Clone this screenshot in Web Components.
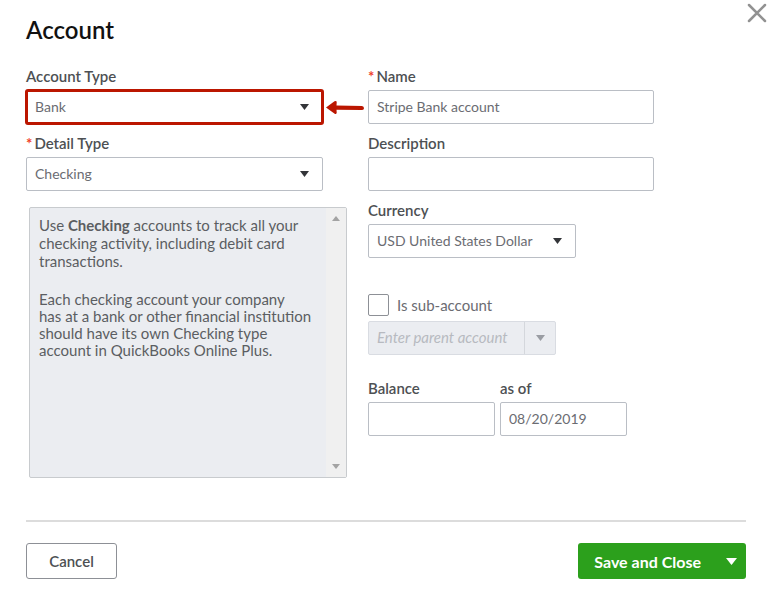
<!DOCTYPE html>
<html lang="en">
<head>
<meta charset="utf-8">
<title>Account</title>
<style>
  body {
    margin: 0;
    background: #fff;
    color: #4d5053;
    font-family: Lato, "Open Sans", sans-serif;
    font-size: 15px;
  }
</style>
</head>
<body>
<account-dialog heading="Account">
  <select-field slot="type" value="Bank" highlight>Account Type</select-field>
  <select-field slot="type" value="Checking" required>Detail Type</select-field>
  <help-box slot="help">
    <p>Use <b>Checking</b> accounts to track all your<br>checking activity, including debit card<br>transactions.</p>
    <p>Each checking account your company<br>has at a bank or other financial institution<br>should have its own Checking type<br>account in QuickBooks Online Plus.</p>
  </help-box>
  <text-field slot="details" value="Stripe Bank account" required>Name</text-field>
  <text-field slot="details">Description</text-field>
  <select-field slot="details" value="USD United States Dollar" compact>Currency</select-field>
  <sub-account slot="parent" placeholder="Enter parent account">Is sub-account</sub-account>
  <text-field slot="balance">Balance</text-field>
  <text-field slot="balance" value="08/20/2019">as of</text-field>
  <plain-button slot="footer">Cancel</plain-button>
  <split-button slot="footer">Save and Close</split-button>
</account-dialog>

<script>
const fieldStyles = `
  :host {
    display: block;
  }
  label {
    display: block;
    margin-bottom: 4px;
    line-height: 19px;
    font-weight: 600;
    white-space: nowrap;
  }
  .star {
    color: #f0402a;
    font-weight: 700;
    margin-right: 2px;
  }
  input, select {
    box-sizing: border-box;
    width: 100%;
    height: 34px;
    margin: 0;
    padding: 0 8px 2px;
    border: 1px solid #babec5;
    border-radius: 2px;
    background: #fff;
    color: #6b6c72;
    font: inherit;
    font-size: 14px;
    appearance: none;
  }
`;

// Small triangle shared by the drop-downs
const caret = (color, width = 9, height = 6) => `
  <svg class="caret" width="${width}" height="${height}" viewBox="0 0 9 6" preserveAspectRatio="none" aria-hidden="true">
    <path d="M0 0h9L4.5 6z" fill="${color}"/>
  </svg>
`;

class TextFieldElement extends HTMLElement {
  constructor() {
    super();
    const star = this.hasAttribute("required") ? `<span class="star">*</span>` : "";
    this.attachShadow({ mode: "open" }).innerHTML = `
      <style>${fieldStyles}</style>
      <label for="control">${star}<slot></slot></label>
      <input id="control" type="text" value="${this.getAttribute("value") || ""}">
    `;
  }
}

class SelectFieldElement extends HTMLElement {
  constructor() {
    super();
    const star = this.hasAttribute("required") ? `<span class="star">*</span>` : "";
    this.attachShadow({ mode: "open" }).innerHTML = `
      <style>
        ${fieldStyles}
        .box {
          display: grid;
          position: relative;
          align-items: center;
        }
        :host([compact]) .box {
          width: 208px;
        }
        select, .caret {
          grid-area: 1 / 1;
        }
        .caret {
          justify-self: end;
          margin-right: 14px;
          pointer-events: none;
        }
        .pointer {
          display: none;
        }
        :host([highlight]) select {
          outline: 3px solid #bb1600;
          outline-offset: -2px;
        }
        /* Callout arrow, lies over the gap beside the field */
        :host([highlight]) .pointer {
          display: block;
          position: absolute;
          left: 100%;
          margin-left: 3px;
        }
      </style>
      <label for="control">${star}<slot></slot></label>
      <div class="box">
        <select id="control"><option>${this.getAttribute("value")}</option></select>
        ${caret("#333539")}
        <svg class="pointer" width="39" height="14" viewBox="0 0 39 14" aria-hidden="true">
          <path d="M0 7.500L8.500 1.200Q10.800 .2 10.700 2.500L10.500 5.500L36 6q2 .3 2 2.200t-2 1.800L10.500 9.800l.2 2.700q.2 2-2 1.200z" fill="#bb1600"/>
        </svg>
      </div>
    `;
  }
}

class HelpBoxElement extends HTMLElement {
  constructor() {
    super();
    this.attachShadow({ mode: "open" }).innerHTML = `
      <style>
        :host {
          display: flex;
          box-sizing: border-box;
          min-height: 271px;
          border: 1px solid #c8cbce;
          border-radius: 2px;
          background: #ebedf1;
          color: #5b5e62;
        }
        .text {
          flex: 1;
          padding: 8px 0 8px 9px;
          line-height: 18px;
          white-space: nowrap;
        }
        ::slotted(p) {
          margin: 0 0 21px;
        }
        ::slotted(p:last-child) {
          margin: 0;
          line-height: 17px;
        }
        .bar {
          display: flex;
          flex-direction: column;
          justify-content: space-between;
          align-items: center;
          width: 20px;
          padding: 8px 0;
          background: #f0f0f0;
        }
        .bar .caret:first-child {
          transform: rotate(180deg);
        }
      </style>
      <div class="text"><slot></slot></div>
      <div class="bar">${caret("#a3a3a3", 8, 5)}${caret("#a3a3a3", 8, 5)}</div>
    `;
  }
}

class SubAccountElement extends HTMLElement {
  constructor() {
    super();
    this.attachShadow({ mode: "open" }).innerHTML = `
      <style>
        :host {
          display: block;
        }
        .check {
          display: flex;
          align-items: center;
          gap: 8px;
          margin-bottom: 5px;
          color: #6b6c72;
        }
        .check input {
          width: 21px;
          height: 22px;
          margin: 0;
          border: 1px solid #8d9096;
          border-radius: 2px;
          background: #fff;
          appearance: none;
        }
        .combo {
          display: flex;
          box-sizing: border-box;
          width: 188px;
          height: 34px;
          border: 1px solid #d9dce2;
          border-radius: 2px;
          background: #ebedf1;
        }
        .combo input {
          flex: 1;
          min-width: 0;
          padding: 0 8px 2px;
          border: 0;
          background: none;
          font: italic 15px Lato, sans-serif;
        }
        .combo input::placeholder {
          color: #b7bac0;
        }
        button {
          display: flex;
          align-items: center;
          justify-content: center;
          width: 31px;
          padding: 0;
          border: 0;
          border-left: 1px solid #d4d7dc;
          background: none;
        }
      </style>
      <div class="check">
        <input id="sub" type="checkbox">
        <label for="sub"><slot></slot></label>
      </div>
      <div class="combo">
        <input type="text" aria-label="Parent account" placeholder="${this.getAttribute("placeholder")}" disabled>
        <button type="button" aria-label="Show accounts" disabled>${caret("#9a9da3")}</button>
      </div>
    `;
  }
}

class PlainButtonElement extends HTMLElement {
  constructor() {
    super();
    this.attachShadow({ mode: "open" }).innerHTML = `
      <style>
        :host {
          display: block;
        }
        button {
          height: 36px;
          min-width: 91px;
          border: 1px solid #8d9096;
          border-radius: 3px;
          background: #fff;
          color: #4d5053;
          font: inherit;
          font-weight: 600;
        }
      </style>
      <button type="button"><slot></slot></button>
    `;
  }
}

class SplitButtonElement extends HTMLElement {
  constructor() {
    super();
    this.attachShadow({ mode: "open" }).innerHTML = `
      <style>
        :host {
          display: flex;
        }
        button {
          display: flex;
          align-items: center;
          justify-content: center;
          height: 36px;
          padding: 0 15px 0 16px;
          border: 0;
          border-radius: 3px 0 0 3px;
          background: #2ca01c;
          color: #fff;
          font: inherit;
          font-size: 16px;
          font-weight: 700;
        }
        .more {
          width: 30px;
          padding: 0;
          border-radius: 0 3px 3px 0;
        }
      </style>
      <button type="button"><slot></slot></button>
      <button type="button" class="more" aria-label="More save options">${caret("#fff", 11, 7)}</button>
    `;
  }
}

class AccountDialogElement extends HTMLElement {
  constructor() {
    super();
    this.attachShadow({ mode: "open" }).innerHTML = `
      <style>
        :host {
          display: block;
          padding: 0 26px 24px;
        }
        header {
          display: flex;
          justify-content: space-between;
          align-items: flex-start;
          margin-right: -22px;
        }
        h1 {
          margin: 14px 0 21px;
          color: #111;
          font-size: 24px;
          font-weight: 600;
          line-height: 32px;
        }
        .close {
          display: flex;
          padding: 3px 0 0;
          border: 0;
          background: none;
        }
        main {
          display: grid;
          grid-template-columns: 342fr 286fr 92fr;
          align-items: start;
        }
        .stack {
          display: grid;
          gap: 10px;
        }
        .types {
          margin-right: 45px;
        }
        .help {
          margin: 16px 21px 0 3px;
        }
        .parent {
          margin: 36px 0 24px;
        }
        .balance {
          display: grid;
          grid-template-columns: 127px 127px;
          gap: 5px;
        }
        footer {
          display: flex;
          justify-content: space-between;
          margin-top: 42px;
          padding-top: 21px;
          border-top: 2px solid #dcdcdc;
        }
      </style>
      <header>
        <h1>${this.getAttribute("heading")}</h1>
        <button type="button" class="close" aria-label="Close">
          <svg width="22" height="20" viewBox="0 0 22 20" aria-hidden="true">
            <path d="M3 2L19 18M19 2L3 18" stroke="#929292" stroke-width="2.5" stroke-linecap="round"/>
          </svg>
        </button>
      </header>
      <main>
        <section>
          <div class="stack types"><slot name="type"></slot></div>
          <div class="help"><slot name="help"></slot></div>
        </section>
        <section>
          <div class="stack"><slot name="details"></slot></div>
          <div class="parent"><slot name="parent"></slot></div>
          <div class="balance"><slot name="balance"></slot></div>
        </section>
      </main>
      <footer><slot name="footer"></slot></footer>
    `;
  }
}

customElements.define("text-field", TextFieldElement);
customElements.define("select-field", SelectFieldElement);
customElements.define("help-box", HelpBoxElement);
customElements.define("sub-account", SubAccountElement);
customElements.define("plain-button", PlainButtonElement);
customElements.define("split-button", SplitButtonElement);
customElements.define("account-dialog", AccountDialogElement);
</script>
</body>
</html>
